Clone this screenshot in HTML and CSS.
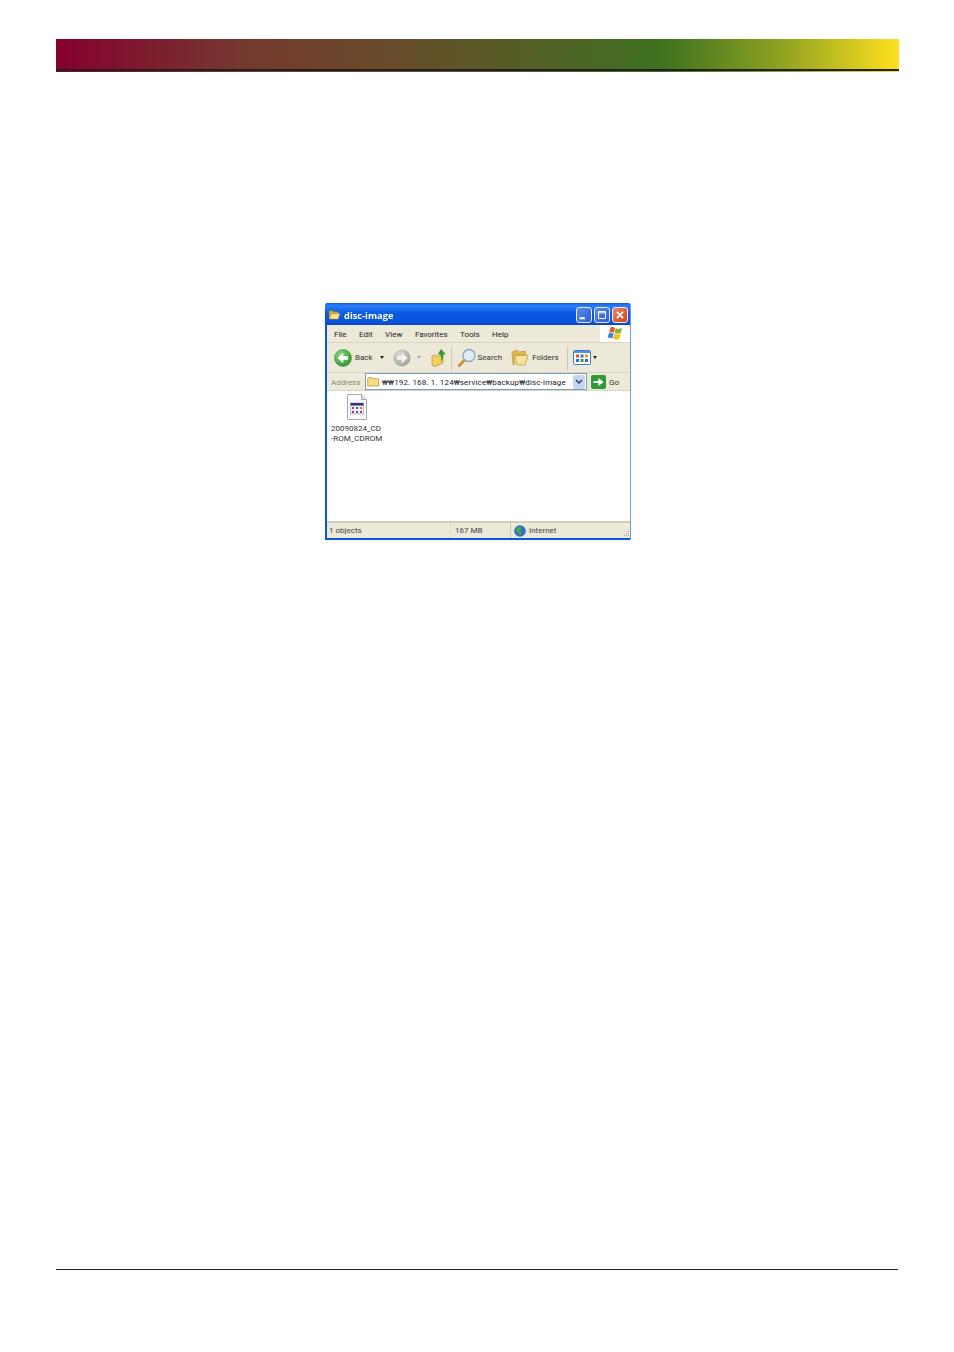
FILE: index.html
```html
<!DOCTYPE html>
<html lang="en">
<head>
<meta charset="utf-8">
<title>disc-image</title>
<link rel="stylesheet" href="styles.css">
</head>
<body>
<div class="banner"></div>
<div class="window">
  <div class="titlebar">
    <svg class="title-icon" viewBox="0 0 14 12"><path d="M1 2h4l1 1h5v2H4L2 10H1z" fill="#d9a520"/><path d="M3.500 5H13l-2 6H1.500z" fill="#fbe38a" stroke="#b98a1e" stroke-width=".6"/></svg>
    <span class="title-text">disc-image</span>
    <div class="caption-btns">
      <span class="cap cap-blue"><svg viewBox="0 0 16 16"><rect x="3" y="10.500" width="6" height="2.400" fill="#fff"/></svg></span>
      <span class="cap cap-blue"><svg viewBox="0 0 16 16"><path d="M4 4h8v8H4zM4 5.500h8" fill="none" stroke="#fff" stroke-width="1.100"/></svg></span>
      <span class="cap cap-red"><svg viewBox="0 0 16 16"><path d="M4.500 4.500l7 7M11.500 4.500l-7 7" stroke="#fff" stroke-width="1.900"/></svg></span>
    </div>
  </div>
  <div class="menubar">
    <div class="menu-items"><span>File</span><span>Edit</span><span>View</span><span>Favorites</span><span>Tools</span><span>Help</span></div>
    <div class="flag-box"><svg viewBox="0 0 16 15"><path d="M3.500 1.500C5 .8 6.500 1 8 2L6.800 6.700C5 5.800 3.600 5.700 2 6.500z" fill="#e8562a"/><path d="M8.800 2.300C10.500 3.200 12.500 3.200 15 1.800L13.800 6.800C11.600 8 9.500 7.800 7.500 6.900z" fill="#86b82c"/><path d="M1.800 7.300C3.400 6.500 5 6.600 6.600 7.500L5.400 12.600C3.800 11.700 2.200 11.600.6 12.300z" fill="#3b83e0"/><path d="M7.300 7.700C9.300 8.700 11.500 8.800 13.600 7.600L12.400 12.800C10.200 14 8.100 13.800 6.100 12.800z" fill="#f5c21b"/></svg></div>
  </div>
  <div class="toolbar">
    <svg class="nav-icon" viewBox="0 0 18 18"><defs><radialGradient id="gb" cx=".35" cy=".3" r=".8"><stop offset="0" stop-color="#8fd67e"/><stop offset="1" stop-color="#2a9130"/></radialGradient></defs><circle cx="9" cy="9" r="8.500" fill="url(#gb)" stroke="#3d8f38" stroke-width=".6"/><path d="M14 7.300H9.300V3.800L3.500 9l5.800 5.200v-3.500H14z" fill="#fff"/></svg>
    <span class="tb-label back-label">Back</span>
    <span class="caret back-caret"></span>
    <svg class="nav-icon fwd" viewBox="0 0 18 18"><defs><radialGradient id="gf" cx=".35" cy=".3" r=".8"><stop offset="0" stop-color="#d8d8d4"/><stop offset="1" stop-color="#9e9e9a"/></radialGradient></defs><circle cx="9" cy="9" r="8.500" fill="url(#gf)"/><path d="M4 7.300h4.700V3.800L14.500 9l-5.800 5.200v-3.500H4z" fill="#f4f4f0"/></svg>
    <span class="caret fwd-caret"></span>
    <svg class="up-icon" viewBox="0 0 16 19"><path d="M1 8l4-1 1 1.500 6-1.500v8l-8 3.500L1 17z" fill="#f3cf5e" stroke="#bb9228" stroke-width=".7"/><path d="M10 1l5 5.500h-2.700c0 3-.6 5.300-2.300 7.500.4-2.600.2-5.300-.8-7.500H6.500z" fill="#3f9a2c"/></svg>
    <span class="tb-sep"></span>
    <svg class="search-icon" viewBox="0 0 20 20"><circle cx="12" cy="7.500" r="6" fill="#dcebf6" stroke="#8aa6bd" stroke-width="1.300"/><path d="M7.500 12L1.500 18.500" stroke="#c9923a" stroke-width="2.600"/></svg>
    <span class="tb-label search-label">Search</span>
    <svg class="folders-icon" viewBox="0 0 18 17"><path d="M1 3l5-2 2 2 6-1 1 4H3l1 9-2 1z" fill="#e3b94e" stroke="#b98a2a" stroke-width=".6"/><path d="M4 6.500h13l-3 9.500H6z" fill="#f8e2a0" stroke="#c0962a" stroke-width=".7"/></svg>
    <span class="tb-label folders-label">Folders</span>
    <span class="tb-sep views-sep"></span>
    <svg class="views-icon" viewBox="0 0 18 15"><rect x=".5" y=".5" width="17" height="14" rx="1" fill="#fff" stroke="#3a78c8"/><rect x="1" y="1" width="16" height="2" fill="#5b94dc"/><path d="M3 4.500h3v3H3z" fill="#d84a3a"/><path d="M7.500 4.500h3v3h-3z" fill="#2a6fd0"/><path d="M12 4.500h3v3h-3z" fill="#e0a020"/><path d="M3 9h3v3H3z" fill="#2a6fd0"/><path d="M7.500 9h3v3h-3z" fill="#3a9a3a"/><path d="M12 9h3v3h-3z" fill="#2a6fd0"/></svg>
    <span class="caret views-caret"></span>
  </div>
  <div class="addressbar">
    <span class="addr-label">Address</span>
    <div class="addr-field">
      <svg class="addr-folder" viewBox="0 0 14 12"><path d="M.7 2.500V11h12V3H6.500l-1-1.300H1.500z" fill="#f6dc86" stroke="#b98f2c" stroke-width=".8"/></svg>
      <span class="addr-text">₩₩192. 168. 1. 124₩service₩backup₩disc-image</span>
      <span class="addr-drop"><svg viewBox="0 0 8 6"><path d="M1 1l3 3 3-3" fill="none" stroke="#2b3f70" stroke-width="1.500"/></svg></span>
    </div>
    <span class="go-btn"><svg viewBox="0 0 14 14"><path d="M2 6h5V3l5 4-5 4V8H2z" fill="#fff"/></svg></span>
    <span class="go-label">Go</span>
  </div>
  <div class="content">
    <div class="file-item">
      <svg class="file-icon" viewBox="0 0 20 26"><path d="M.5.500h14l5 5v20H.5z" fill="#fbfbfb" stroke="#a8a8a8"/><path d="M14.500.500v5h5" fill="#e3e3e3" stroke="#a8a8a8"/><rect x="3.500" y="9" width="13" height="11" fill="#ecebf2" stroke="#8f8fa8" stroke-width=".5"/><rect x="3.500" y="9" width="13" height="2.500" fill="#33337a"/><path d="M5 13h2v2H5zM5 17h2v2H5z" fill="#c03060"/><path d="M9 13h2v2H9zM9 17h2v2H9z" fill="#3a6ac0"/><path d="M13 13h2v2h-2z" fill="#d08020"/><path d="M13 17h2v2h-2z" fill="#c03060"/></svg>
      <div class="file-name">20090824_CD<br>-ROM_CDROM</div>
    </div>
  </div>
  <div class="statusbar">
    <span class="st st-objects">1 objects</span>
    <span class="st st-size">167 MB</span>
    <span class="st st-zone"><svg class="globe" viewBox="0 0 12 12"><circle cx="6" cy="6" r="5.800" fill="#2a72c0"/><path d="M3 2.500l3-1 1.500 2L6 5.500 7.500 8 6 10.500 4.500 8 2 6z" fill="#4da648"/></svg>Internet</span>
    <svg class="grip" viewBox="0 0 8 8"><path d="M6 1h1v1H6zM4 3h1v1H4zM6 3h1v1H6zM2 5h1v1H2zM4 5h1v1H4zM6 5h1v1H6z" fill="#a9a792"/></svg>
  </div>
</div>
<div class="footer-rule"></div>
</body>
</html>
```
FILE: styles.css
```css
* { box-sizing: border-box; }
html, body { margin: 0; padding: 0; background: #fff; }
body { height: 1352px; padding-top: 39px; overflow: hidden; font-family: Roboto, "Liberation Sans", sans-serif; font-size: 8px; color: #333; }

.banner {
  height: 33px;
  margin: 0 55px 0 56px;
  background:
    linear-gradient(#231f20, #231f20) left bottom 1px / 100% 2px no-repeat,
    linear-gradient(90deg, #85002e 0%, #75382f 22%, #6a4a2c 38%, #3f711f 72%, #8ea222 86%, #ffe01f 100%);
}

.window {
  width: 306px;
  height: 237px;
  margin: 231px 0 0 325px;
  display: flex;
  flex-direction: column;
  background: #0a55e0;
  padding: 0 0 2px 2px;
  border-right: 1px solid #6f9cf0;
  border-radius: 3px 3px 0 0;
  filter: blur(.25px);
}

.titlebar {
  height: 22px;
  margin: 0 0 0 -2px;
  padding: 0 0 0 3px;
  display: flex;
  align-items: center;
  background: linear-gradient(180deg, #0a5ae8 0%, #2a7df6 12%, #0a57e2 50%, #0a55df 85%, #0a45c0 100%);
  border-radius: 3px 3px 0 0;
}
.title-icon { width: 13px; height: 11px; margin-right: 3px; }
.title-text { font-family: "Open Sans", sans-serif; font-size: 9.300px; font-weight: 700; color: #fff; padding-top: 2px; }
.caption-btns { margin-left: auto; display: flex; gap: 2px; padding: 2px 2px 0 0; }
.cap { width: 16px; height: 16px; display: block; border: 1px solid #e8eef8; border-radius: 3px; }
.cap svg { display: block; width: 100%; height: 100%; }
.cap-blue { background: linear-gradient(135deg, #5b8cf0, #2a5cd8); }
.cap-red { background: linear-gradient(135deg, #ec8a68, #d2401a); }

.menubar { height: 18px; display: flex; background: #ece9d8; border-bottom: 1px solid #d8d5c4; }
.menu-items { display: flex; flex: 1; align-items: center; padding: 1px 0 0 7px; gap: 12.500px; color: #222; }
.flag-box { width: 30px; background: #fff; display: flex; align-items: center; justify-content: center; }
.flag-box svg { width: 16px; height: 15px; }

.toolbar { height: 30px; display: flex; align-items: center; background: #ece9d8; border-bottom: 1px solid #d8d5c4; padding-left: 7px; }
.nav-icon { width: 18px; height: 18px; }
.tb-label { color: #333; }
.back-label { margin-left: 3px; }
.caret { width: 0; height: 0; border: 2px solid transparent; border-top: 3px solid #222; border-bottom: 0; }
.back-caret { margin-left: 7px; }
.fwd { margin-left: 9px; }
.fwd-caret { margin-left: 6px; border-top-color: #aaa; }
.up-icon { width: 16px; height: 19px; margin-left: 10px; }
.tb-sep { width: 1px; height: 24px; background: #cfccb9; margin-left: 4px; }
.search-icon { width: 20px; height: 20px; margin-left: 5px; }
.search-label { margin-left: 1px; }
.folders-icon { width: 18px; height: 17px; margin-left: 9px; }
.folders-label { margin-left: 3px; }
.views-sep { margin-left: 8px; }
.views-icon { width: 18px; height: 15px; margin-left: 5px; }
.views-caret { margin-left: 2px; }

.addressbar { height: 18px; display: flex; align-items: center; background: #ece9d8; padding-left: 4px; border-bottom: 1px solid #d8d5c4; }
.addr-label { color: #8a8878; width: 34px; padding-top: 1px; }
.addr-field { width: 222px; height: 17px; display: flex; align-items: center; background: #fff; border: 1px solid #7f9db9; }
.addr-folder { width: 13px; height: 11px; margin-left: 1px; }
.addr-text { margin-left: 2px; padding-top: 1px; color: #222; white-space: nowrap; flex: 1; letter-spacing: .15px; }
.addr-drop { width: 12px; height: 14px; margin-right: 1px; background: #c6d4f4; border-radius: 2px; display: flex; align-items: center; justify-content: center; }
.addr-drop svg { width: 8px; height: 6px; }
.go-btn { width: 15px; height: 14px; margin-left: 4px; background: #2f9a3a; border-radius: 2px; display: block; }
.go-btn svg { display: block; width: 100%; height: 100%; }
.go-label { margin-left: 3px; padding-top: 1px; }

.content { flex: 1; background: #fff; padding: 3px 0 0 4px; }
.file-item { width: 51px; display: flex; flex-direction: column; align-items: center; }
.file-icon { width: 20px; height: 26px; margin-bottom: 4px; }
.file-name { width: 100%; line-height: 10px; color: #333; white-space: nowrap; }

.statusbar { height: 17px; display: flex; align-items: center; background: #ece9d8; border-top: 2px solid #d0cdba; }
.st { display: flex; align-items: center; height: 100%; padding-left: 2px; color: #444; }
.st-objects { width: 124px; border-right: 1px solid #dcd9c8; }
.st-size { width: 60px; padding-left: 4px; border-right: 1px solid #cfccb9; }
.st-zone { padding-left: 3px; }
.globe { width: 12px; height: 12px; margin-right: 3px; }
.grip { width: 8px; height: 8px; margin-left: auto; align-self: flex-end; }

.footer-rule { width: 842px; height: 1px; margin: 729px 0 0 56px; background: #222; }
```
